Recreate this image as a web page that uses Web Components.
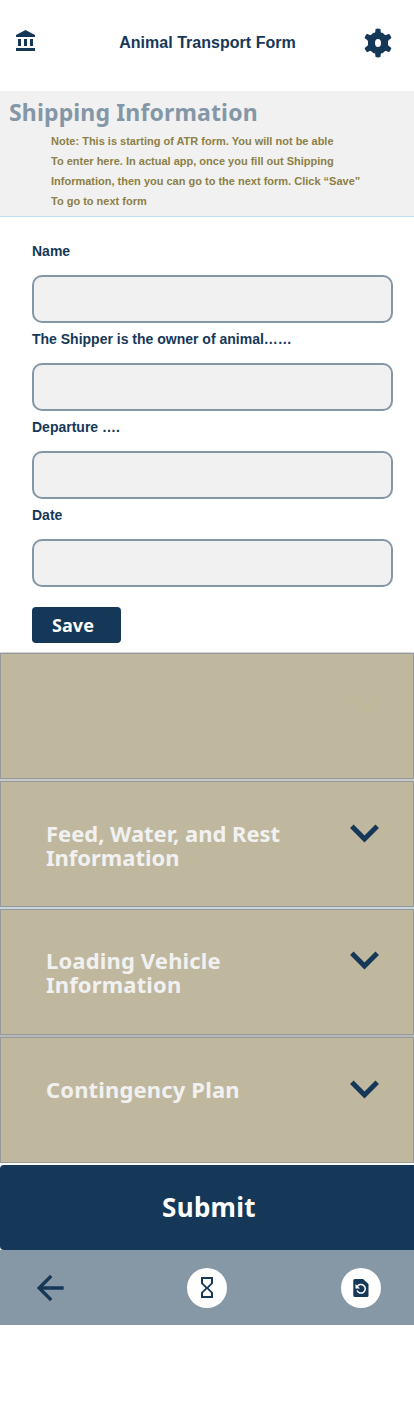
<!DOCTYPE html>
<html lang="en">
<head>
<meta charset="utf-8">
<title>Animal Transport Form</title>
<style>
body{margin:0;background:#fff;color:#163858;font-family:"Liberation Sans",Arial,sans-serif}
</style>
</head>
<body>
<transport-page></transport-page>
<script>
const define=(name,html)=>{
  const t=document.createElement('template');t.innerHTML=html;
  customElements.define(name,class extends HTMLElement{
    constructor(){super();this.attachShadow({mode:'open'}).append(t.content.cloneNode(true));}
  });
};
const tooth='M12.600.9q2.400-.8 4.800 0l.5 3.600 2.100 3H10l2.100-3z';
const teeth=[0,60,120,180,240,300].map(a=>`<path d="${tooth}" transform="rotate(${a} 15 15)"/>`).join('');
define('app-header',`<style>
:host{display:grid;grid-template-columns:92px 1fr 92px;height:91px;box-sizing:border-box;padding-bottom:6px;align-items:center}
svg{display:block}.bank{margin:-3px 0 0 15px}.gear{margin:0 0 0 41px}
h1{margin:0;padding-left:1px;text-align:center;font:bold 16px "Liberation Sans",Arial,sans-serif;letter-spacing:.03px}
</style>
<svg class="bank" width="21" height="22" viewBox="0 0 21 22" fill="currentColor"><path d="M10.500 0 20 5v2H1V5zM3 9h3v7H3zM9 9h3v7H9zM15 9h3v7h-3zM1 18h19v3H1z"/></svg>
<h1><slot></slot></h1>
<svg class="gear" width="30" height="30" viewBox="0 0 30 30"><g fill="currentColor"><path d="M10.500 4.800h9l5.500 4.700v11l-5.500 4.700h-9L5 20.500v-11z"/>${teeth}</g><ellipse cx="15" cy="15" rx="3" ry="3.900" fill="#fff"/></svg>`);
define('section-note',`<style>
:host{display:block;height:126px;box-sizing:border-box;background:#f1f1f1;border-bottom:1px solid #bfdff8;padding:6px 0 0 9px}
h2{margin:0;color:#8497a6;font:700 23px/30px "Noto Sans",sans-serif;letter-spacing:.15px;white-space:nowrap}
p{margin:4px 0 0 42px;color:#8c8046;font:bold 11px/20px "Liberation Sans",Arial,sans-serif;white-space:nowrap}
</style><h2><slot name="title"></slot></h2><p><slot></slot></p>`);
define('form-field',`<style>
:host{display:block;height:88px}
label{display:block;height:36px;font:bold 14px/24px "Liberation Sans",Arial,sans-serif;white-space:nowrap}
input{display:block;box-sizing:border-box;width:361px;height:48px;margin:0;border:2px solid #8497a6;border-radius:10px;background:#f1f1f1;outline:0}
</style><label for="f"><slot></slot></label><input id="f">`);
define('save-button',`<style>
:host{display:block}
button{display:block;width:89px;height:36px;margin:0;padding:0 7px 0 0;border:0;border-radius:4px;background:#163858;color:#fff;font:700 18px/36px "Noto Sans",sans-serif;letter-spacing:.1px}
</style><button><slot></slot></button>`);
define('form-panel',`<style>
:host{display:flex;justify-content:space-between;box-sizing:border-box;height:126px;border:1px solid #96999a;background:#bfb89f;padding:41px 34px 0 45px;box-shadow:0 2px 0 var(--gap,#c8c9c9)}
h3{margin:-2px 0 0;color:#f1f1f1;font:700 22px/24px "Noto Sans",sans-serif;letter-spacing:var(--track,.05px);white-space:nowrap}
svg{display:block;margin-top:1px;flex:none}
:host([locked]) svg{color:#bfb899}
</style><h3><slot></slot></h3>
<svg width="30" height="20" viewBox="0 0 30 20" fill="none" stroke="currentColor" stroke-width="5"><path d="M2.800 2.200 15.500 15 28.200 2.200"/></svg>`);
define('submit-button',`<style>
:host{display:block}
button{display:block;width:100%;height:85px;margin:0;padding:0 0 0 4px;border:0;border-radius:4px 0 0 4px;background:#163858;color:#fff;font:700 26px/85px "Noto Sans",sans-serif;letter-spacing:.3px}
</style><button><slot></slot></button>`);
define('bottom-nav',`<style>
:host{display:grid;grid-template-columns:187px 154px 73px;height:75px;background:#8697a5;align-items:center}
svg{display:block}.back{margin-left:36px}
span{display:grid;place-items:center;width:40px;height:40px;border-radius:50%;background:#fff}
</style>
<svg class="back" width="28" height="28" viewBox="0 0 28 28" fill="none" stroke="currentColor" stroke-width="3.300"><path d="M27.700 14H3M15.200 2 3.200 14 15.200 26"/></svg>
<span><svg width="40" height="40" viewBox="0 0 40 40"><path fill="currentColor" fill-rule="evenodd" d="M14 9h12v6.500L21.500 20l4.500 4.500V30H14v-5.500l4.500-4.500-4.500-4.500zM16 11v4l4 4 4-4v-4zM20 21l-4 4v3h8v-3z"/></svg></span>
<span><svg width="40" height="40" viewBox="0 0 40 40"><path fill="currentColor" d="M13.500 11H22l5.500 5v11.500q0 1.500-1.500 1.500h-12q-1.700 0-1.700-1.500v-15q0-1.500 1.500-1.500z"/><path fill="none" stroke="#fff" stroke-width="1.500" d="M16.200 18.700A4.300 4.300 0 1 1 16 22.500"/><path fill="#fff" d="M14.500 16v4.500h4.500z"/></svg></span>`);
define('transport-page',`<style>
:host{display:flex;flex-direction:column;width:414px;height:1402px;background:#fff;overflow:hidden}
.fields{padding:22px 0 0 32px;height:436px;box-sizing:border-box;border-bottom:1px solid #d5d6d7}
save-button{margin-top:16px}
.panels{display:grid;row-gap:2px;padding-bottom:2px;height:512px;box-sizing:border-box}
.blue{--gap:#c9d5de;--track:-.02px}.grey{--gap:#b7b8b9;--track:.15px}.last{--gap:#fff;--track:.15px}
.grey{padding-top:40px}
</style>
<app-header>Animal Transport Form</app-header>
<section-note><span slot="title">Shipping Information</span>Note: This is starting of ATR form. You will not be able<br>To enter here. In actual app, once you fill out Shipping<br>Information, then you can go to the next form. Click “Save”<br>To go to next form</section-note>
<div class="fields"><form-field>Name</form-field><form-field>The Shipper is the owner of animal……</form-field><form-field>Departure ….</form-field><form-field>Date</form-field><save-button>Save</save-button></div>
<div class="panels"><form-panel locked></form-panel><form-panel class="blue">Feed, Water, and Rest<br>Information</form-panel><form-panel class="grey">Loading Vehicle<br>Information</form-panel><form-panel class="last">Contingency Plan</form-panel></div>
<submit-button>Submit</submit-button>
<bottom-nav></bottom-nav>`);
</script>
</body>
</html>
